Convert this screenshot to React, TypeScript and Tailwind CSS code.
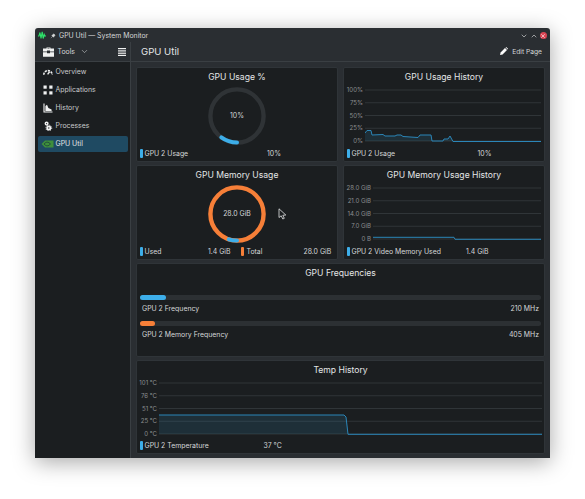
import type { ReactNode } from "react";
import { ChevronDown, ChevronUp, X } from "lucide-react";

const FONT = "font-['Inter','Liberation_Sans',sans-serif]";
const BLUE = "#3daee9";
const ORANGE = "#f67f38";

function Card({ title, children, className = "" }: { title: string; children: ReactNode; className?: string }) {
  return (
    <section className={`flex min-w-0 flex-col rounded-[2px] border border-[#2f3438] bg-[#1b1e20] ${className}`}>
      <h2 className="pt-[3px] text-center text-[8.6px] leading-[13px] font-normal text-[#e4e6e7]">{title}</h2>
      {children}
    </section>
  );
}

function Swatch({ color }: { color: string }) {
  return <span className="mr-[1.5px] h-[8.5px] w-[3px] shrink-0 rounded-[1px]" style={{ backgroundColor: color }} />;
}

function Ring({ value, color, track }: { value: number; color: string; track: string }) {
  const r = 26.6;
  const c = 2 * Math.PI * r;
  return (
    <svg width="58" height="58" viewBox="0 0 58 58" className="absolute inset-0">
      <circle cx="29" cy="29" r={r} fill="none" stroke={track} strokeWidth="4.4" />
      <circle
        cx="29"
        cy="29"
        r={r}
        fill="none"
        stroke={color}
        strokeWidth="4"
        strokeLinecap="round"
        strokeDasharray={`${c * value} ${c}`}
        transform="rotate(90 29 29)"
      />
    </svg>
  );
}

function Gauge({ label, value, color, track }: { label: string; value: number; color: string; track: string }) {
  return (
    <div className="relative mx-auto mt-[3px] flex h-[58px] w-[58px] items-center justify-center">
      <Ring value={value} color={color} track={track} />
      <span className="relative text-[6.9px] text-[#d5d7d8]">{label}</span>
    </div>
  );
}

function Chart({
  labels,
  labelWidth,
  width,
  line,
  fill,
  height = 51,
}: {
  labels: string[];
  labelWidth: number;
  width: number;
  line: string;
  fill: boolean;
  height?: number;
}) {
  const area = `${line} L${width} ${height} L0 ${height} Z`;
  return (
    <div className="mt-[2px] flex items-stretch">
      <div
        className="mr-[1.5px] flex h-[59px] shrink-0 flex-col justify-between text-right text-[6.1px] leading-[8px] text-[#8b8e90]"
        style={{ width: labelWidth }}
      >
        {labels.map((l) => (
          <span key={l}>{l}</span>
        ))}
      </div>
      <svg width={width} height="59" viewBox={`0 -4 ${width} 59`} className="shrink-0">
        {[0, 12.75, 25.5, 38.25, 51].map((y) => (
          <line key={y} x1="0" x2={width} y1={y} y2={y} stroke="#33383b" strokeWidth="0.9" />
        ))}
        {fill && <path d={area} fill="#3daee9" fillOpacity="0.12" />}
        <path d={line} fill="none" stroke="#2b86b8" strokeWidth="1" />
      </svg>
    </div>
  );
}

function LegendRow({ children }: { children: ReactNode }) {
  return <div className="mt-auto mb-[2.5px] flex h-[10px] items-center pl-[3px] text-[6.9px] leading-[10px] text-[#d5d7d8]">{children}</div>;
}

function FreqBar({ name, value, color, pct }: { name: string; value: string; color: string; pct: number }) {
  return (
    <div className="mb-[7px]">
      <div className="h-[4.5px] rounded-full bg-[#2c3033]">
        <div className="h-full rounded-full" style={{ width: `${pct}%`, backgroundColor: color }} />
      </div>
      <div className="mt-[4.5px] flex justify-between px-[2px] text-[6.9px] leading-[10px] text-[#d5d7d8]">
        <span>{name}</span>
        <span>{value}</span>
      </div>
    </div>
  );
}

function NavIcon({ name }: { name: string }) {
  if (name === "Overview")
    return (
      <svg width="10" height="10" viewBox="0 0 10 10" fill="none" stroke="#f0f1f1" strokeWidth="1.6">
        <path d="M0.8 7.8 A4.2 4.2 0 0 1 9.2 7.8" strokeDasharray="2.2 0.9" />
        <path d="M4.6 7.4 L6.6 4.8" strokeWidth="1.4" />
      </svg>
    );
  if (name === "Applications")
    return (
      <svg width="10" height="10" viewBox="0 0 10 10" fill="#f0f1f1">
        <rect x="0.5" y="0.5" width="3.2" height="3.2" />
        <rect x="6.3" y="0.5" width="3.2" height="3.2" />
        <rect x="0.5" y="6.3" width="3.2" height="3.2" />
        <rect x="6.3" y="6.3" width="3.2" height="3.2" />
      </svg>
    );
  if (name === "History")
    return (
      <svg width="10" height="10" viewBox="0 0 10 10" fill="none" stroke="#f0f1f1" strokeWidth="1.1">
        <path d="M1 0.5 V9 H9.5" />
        <path d="M2.4 6.8 V3 L4 1.8 L5.4 5 L8.6 6.4 V7.9 H2.4 Z" fill="#f0f1f1" stroke="none" />
      </svg>
    );
  if (name === "Processes")
    return (
      <svg width="10" height="10" viewBox="0 0 10 10" fill="none" stroke="#f0f1f1">
        <circle cx="3.6" cy="2.6" r="1.3" strokeWidth="1.5" />
        <circle cx="5.8" cy="7" r="1.6" strokeWidth="1.8" />
        <circle cx="5.8" cy="7" r="2.9" strokeWidth="0.9" strokeDasharray="1.1 1.2" />
      </svg>
    );
  return (
    <svg width="13" height="10" viewBox="0 0 13 10">
      <path d="M0.5 5 L4 1.5 H12.5 V8.5 H4 Z" fill="#3f8f3c" />
      <path d="M3 5 C5 2.6 7.5 2.6 9.5 5 C7.5 7.4 5 7.4 3 5 Z" fill="none" stroke="#1f4b3a" strokeWidth="1" />
    </svg>
  );
}

const NAV = ["Overview", "Applications", "History", "Processes", "GPU Util"];

export default function App() {
  return (
    <div className={`h-[499px] w-[585px] overflow-hidden bg-white pt-[28px] pl-[35px] ${FONT}`}>
      <div className="relative flex h-[430px] w-[515px] flex-col rounded-t-[3px] bg-[#2a2e32] shadow-[0_4px_22px_rgba(0,0,0,0.35)]">
        {/* title bar */}
        <header className="flex h-[14px] shrink-0 items-center pt-[1px] pr-[3px] pl-[2.5px] text-[#d5d7d8]">
          <svg width="8" height="9" viewBox="0 0 8 9" fill="none" stroke="#2ee66b" strokeWidth="1.1">
            <path d="M0 5 H1 L2 1.5 L3 7.5 L4.2 0.8 L5.2 7.5 L6.2 3.5 L6.9 5 H8" />
          </svg>
          <svg width="6" height="6" viewBox="0 0 7 7" className="mr-[3px] ml-[4.5px]">
            <path d="M1 6 L3 4 L2 3 L4.5 1 L6 2.5 L4 5 L3 4" fill="#d5d7d8" stroke="#d5d7d8" strokeWidth="0.5" />
          </svg>
          <span className="text-[6.9px] leading-[13px]">GPU Util — System Monitor</span>
          <div className="ml-auto flex items-center gap-[2px]">
            <ChevronDown size={8} strokeWidth={2} />
            <ChevronUp size={8} strokeWidth={2} />
            <span className="flex h-[7.5px] w-[7.5px] items-center justify-center rounded-full bg-[#da4453] text-[#f4d4d8]">
              <X size={6} strokeWidth={3} />
            </span>
          </div>
        </header>

        {/* toolbar */}
        <div className="flex h-[20px] shrink-0 items-center border-b border-[#3a3f43] text-[#d5d7d8]">
          <div className="flex h-full w-[96px] shrink-0 items-center border-r border-[#3a3f43] pl-[8px]">
            <svg width="11" height="10" viewBox="0 0 11 10" fill="#f0f1f1">
              <path d="M3.5 1.6 V0.4 H7.5 V1.6 H11 V4.4 H7 V3.6 H4 V4.4 H0 V1.6 Z M4.5 1.6 H6.5 V1.1 H4.5 Z" fillRule="evenodd" />
              <path d="M0 5.2 H4 V6.2 H7 V5.2 H11 V9.8 H0 Z" />
            </svg>
            <span className="ml-[3.5px] pt-[1px] text-[6.9px]">Tools</span>
            <ChevronDown size={9} strokeWidth={1.5} className="ml-[5px]" />
            <svg width="8" height="8" viewBox="0 0 8 8" fill="#f0f1f1" className="ml-[29px]">
              <rect y="0" width="8" height="1.2" />
              <rect y="2.3" width="8" height="1.2" />
              <rect y="4.6" width="8" height="1.2" />
              <rect y="6.8" width="8" height="1.2" />
            </svg>
          </div>
          <span className="ml-[10px] pt-[1px] text-[9.6px] text-[#e4e6e7]">GPU Util</span>
          <div className="mr-[8px] ml-auto flex items-center gap-[4.5px]">
            <svg width="8" height="8" viewBox="0 0 8 8" fill="#fcfcfc">
              <path d="M0 8 L0.6 5.4 L5 1 L7 3 L2.6 7.4 Z" />
              <path d="M5.6 0.4 L6.2 0 L8 1.8 L7.6 2.4 Z" />
            </svg>
            <span className="pt-[1px] text-[6.7px]">Edit Page</span>
          </div>
        </div>

        <div className="flex min-h-0 flex-1">
          {/* sidebar */}
          <nav className="flex w-[96px] shrink-0 flex-col gap-[2px] border-r border-[#3a3f43] bg-[#1b1e20] px-[2.5px] pt-[2px]">
            {NAV.map((item) => (
              <div
                key={item}
                className={`flex h-[16px] items-center rounded-[2px] pl-[2px] text-[6.9px] ${
                  item === "GPU Util" ? "bg-[#1f4a62] text-[#e4e6e7]" : "text-[#c9cbcc]"
                }`}
              >
                <span className="flex w-[16px] shrink-0 justify-center">
                  <NavIcon name={item} />
                </span>
                <span className="pt-[1px]">{item}</span>
              </div>
            ))}
          </nav>

          {/* cards */}
          <main className="grid min-w-0 flex-1 grid-cols-[202px_202px] grid-rows-[95px_95px_94px_94px] gap-x-[5px] gap-y-[3px] pt-[5px] pl-[5px]">
            <Card title="GPU Usage %">
              <Gauge label="10%" value={0.1} color={BLUE} track="#2f3336" />
              <LegendRow>
                <Swatch color={BLUE} />
                <span className="w-[122.5px]">GPU 2 Usage</span>
                <span>10%</span>
              </LegendRow>
            </Card>

            <Card title="GPU Usage History">
              <Chart
                labels={["100%", "75%", "50%", "25%", "0%"]}
                labelWidth={19}
                width={176}
                fill
                line="M0 43 L2 40.5 L6 40.5 L7 45 L18 44.5 L20 46 L30 46 L32 45 L36 45 L38 46.5 L53 47.5 L55 45 L66 45 L67 51 L78 51 L79 49 L83 49 L85 46 L88 51.5 L176 51.5"
              />
              <LegendRow>
                <Swatch color={BLUE} />
                <span className="w-[126px]">GPU 2 Usage</span>
                <span>10%</span>
              </LegendRow>
            </Card>

            <Card title="GPU Memory Usage">
              <Gauge label="28.0 GiB" value={0.05} color={BLUE} track={ORANGE} />
              <LegendRow>
                <Swatch color={BLUE} />
                <span className="w-[63.5px]">Used</span>
                <span className="w-[33px]">1.4 GiB</span>
                <Swatch color={ORANGE} />
                <span className="ml-[1px] w-[57px]">Total</span>
                <span>28.0 GiB</span>
              </LegendRow>
            </Card>

            <Card title="GPU Memory Usage History">
              <Chart
                labels={["28.0 GiB", "21.0 GiB", "14.0 GiB", "7.0 GiB", "0 B"]}
                labelWidth={27}
                width={168}
                fill={false}
                line="M0 49.3 L81 49.3 L82 51.3 L168 51.3"
              />
              <LegendRow>
                <Swatch color={BLUE} />
                <span className="w-[114.5px]">GPU 2 Video Memory Used</span>
                <span>1.4 GiB</span>
              </LegendRow>
            </Card>

            <Card title="GPU Frequencies" className="col-span-2">
              <div className="mt-[15px] pr-[3px] pl-[3px]">
                <FreqBar name="GPU 2 Frequency" value="210 MHz" color={BLUE} pct={6.6} />
                <FreqBar name="GPU 2 Memory Frequency" value="405 MHz" color={ORANGE} pct={3.8} />
              </div>
            </Card>

            <Card title="Temp History" className="col-span-2">
              <Chart
                labels={["101 °C", "76 °C", "51 °C", "25 °C", "0 °C"]}
                labelWidth={20}
                width={383}
                fill
                line="M0 32 L185 32 L187 34 L189 51.3 L383 51.3"
              />
              <LegendRow>
                <Swatch color={BLUE} />
                <span className="w-[119px]">GPU 2 Temperature</span>
                <span>37 °C</span>
              </LegendRow>
            </Card>
          </main>
        </div>

        {/* mouse pointer over the page */}
        <svg width="9" height="12" viewBox="0 0 9 12" className="absolute top-[180px] left-[243px]">
          <path d="M1 0.8 V9.5 L3.2 7.8 L4.8 11 L6.3 10.3 L4.8 7.3 L7.8 7 Z" fill="#1b1e20" stroke="#e4e6e7" strokeWidth="0.8" />
        </svg>
      </div>
    </div>
  );
}
